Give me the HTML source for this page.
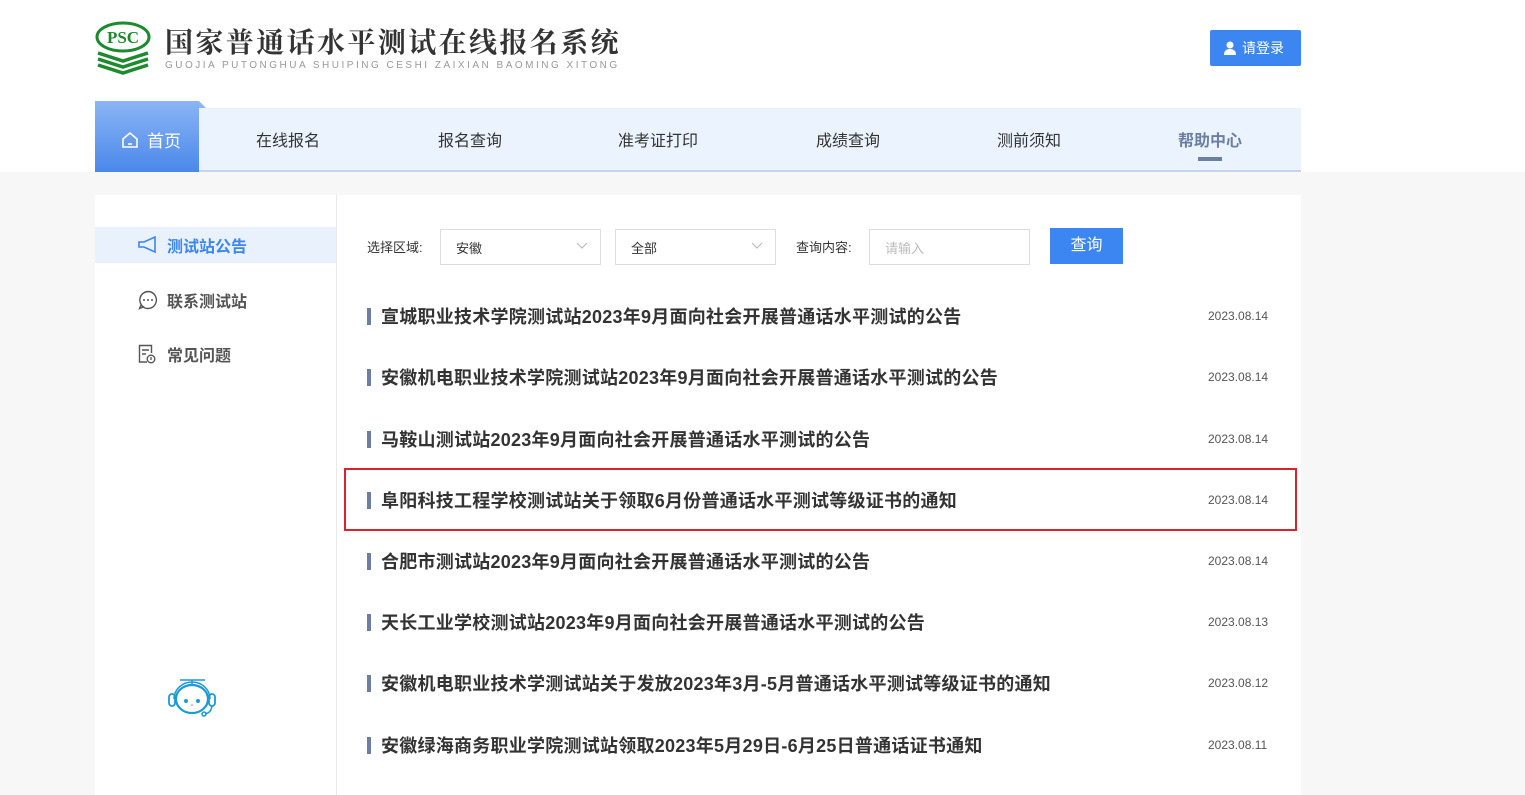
<!DOCTYPE html><html><head><meta charset="utf-8"><style>
*{margin:0;padding:0;box-sizing:border-box}
body{width:1525px;height:787px;overflow:hidden;background:#f7f7f7;font-family:"Liberation Sans","Noto Sans CJK SC",sans-serif;position:relative}
.top{position:absolute;left:0;top:0;width:1525px;height:172px;background:#fff}
.abs{position:absolute}
.nav{position:absolute;left:95px;top:108px;width:1206px;height:64px;background:#ebf4fe;border-bottom:2px solid #c5d5ea}
.ni{position:absolute;top:127px;font-size:16px;color:#333;transform:translateX(-50%);white-space:nowrap}
.card{position:absolute;left:95px;top:195px;width:1206px;height:600px;background:#fff}
.side{position:absolute;left:95px;top:195px;width:242px;height:600px;border-right:1px solid #e8e8e8}
.row{position:absolute;left:367px;width:910px;height:20px}
.row .b{position:absolute;left:0;top:2px;width:4px;height:17px;background:#6c7fa3}
.row .t{position:absolute;left:14px;top:-3px;font-size:18px;font-weight:bold;color:#333;white-space:nowrap;letter-spacing:0.25px}
.row .d{position:absolute;left:841px;top:3px;font-size:12px;color:#555}
.sel{position:absolute;top:229px;height:36px;border:1px solid #ddd;font-size:13px;color:#333;padding:8px 0 0 15px}
.sel svg{position:absolute;right:12px;top:12px}
</style></head><body>
<div class="top"></div>
<svg class="abs" style="left:95px;top:20px" width="56" height="56" viewBox="0 0 56 56">
<ellipse cx="28" cy="17" rx="26" ry="14" fill="none" stroke="#1d8a2f" stroke-width="3"/>
<text x="28" y="23" font-family="Liberation Serif" font-weight="bold" font-size="17" fill="#1d8a2f" text-anchor="middle">PSC</text>
<path d="M3 33 L28 41 L53 33 M3 39 L28 47 L53 39 M3 45 L28 53 L53 45" stroke="#1d8a2f" stroke-width="3.5" fill="none"/>
</svg>
<div class="abs" style="left:165px;top:26px;font-size:28px;line-height:36px;color:#333;font-weight:bold;letter-spacing:2.4px;font-family:'Liberation Serif','Noto Serif CJK SC',serif;white-space:nowrap">国家普通话水平测试在线报名系统</div>
<div class="abs" style="left:165px;top:60px;font-size:10px;color:#999;letter-spacing:2.5px;white-space:nowrap">GUOJIA PUTONGHUA SHUIPING CESHI ZAIXIAN BAOMING XITONG</div>
<div class="abs" style="left:1210px;top:30px;width:91px;height:36px;background:#3b86f0;border-radius:2px;color:#fff;font-size:14px;padding:8px 0 0 32px">请登录
<svg class="abs" style="left:14px;top:11px" width="12" height="14" viewBox="0 0 12 14"><circle cx="6" cy="4" r="3.5" fill="#fff"/><path d="M0 14 Q0 8 6 8 Q12 8 12 14Z" fill="#fff"/></svg></div>
<div class="nav"></div>
<div class="abs" style="left:95px;top:101px;width:104px;height:71px;background:linear-gradient(#8bb5f5,#4a88ea)"></div>
<div class="abs" style="left:199px;top:101px;width:0;height:0;border-left:7px solid #8bb5f5;border-top:7px solid transparent"></div>
<svg class="abs" style="left:121px;top:131px" width="18" height="18" viewBox="0 0 18 18"><path d="M2 8 L9 2 L16 8 V16 H2Z" fill="none" stroke="#fff" stroke-width="1.6"/><path d="M7 13 H11" stroke="#fff" stroke-width="1.6"/></svg>
<div class="abs" style="left:147px;top:127px;font-size:17px;color:#fff">首页</div>
<div class="ni" style="left:288px">在线报名</div>
<div class="ni" style="left:470px">报名查询</div>
<div class="ni" style="left:658px">准考证打印</div>
<div class="ni" style="left:848px">成绩查询</div>
<div class="ni" style="left:1029px">测前须知</div>
<div class="ni" style="left:1210px;color:#6c7fa3;font-weight:bold">帮助中心</div>
<div class="abs" style="left:1198px;top:157px;width:24px;height:4px;background:#6c7fa3"></div>
<div class="card"></div>
<div class="side"></div>
<div class="abs" style="left:95px;top:227px;width:241px;height:36px;background:#e9f1fd"></div>
<svg class="abs" style="left:138px;top:236px" width="20" height="18" viewBox="0 0 20 18"><path d="M1 6 H6 L17 1 V16 L6 11 H1Z" fill="none" stroke="#3b86f0" stroke-width="1.6"/></svg>
<div class="abs" style="left:167px;top:233px;font-size:16px;font-weight:bold;color:#3b86f0">测试站公告</div>
<svg class="abs" style="left:138px;top:290px" width="20" height="20" viewBox="0 0 20 20"><path d="M10 1.5 A8.5 8.5 0 1 1 3 15 L1.5 18.5 L5.5 17 A8.5 8.5 0 0 1 10 1.5" fill="none" stroke="#555" stroke-width="1.4"/><circle cx="6" cy="10" r="1" fill="#555"/><circle cx="10" cy="10" r="1" fill="#555"/><circle cx="14" cy="10" r="1" fill="#555"/></svg>
<div class="abs" style="left:167px;top:288px;font-size:16px;font-weight:bold;color:#555">联系测试站</div>
<svg class="abs" style="left:138px;top:344px" width="18" height="20" viewBox="0 0 18 20"><path d="M9 18 H1.5 V1.5 H13.5 V9" fill="none" stroke="#555" stroke-width="1.4"/><path d="M4 6 H11 M4 10 H8" stroke="#555" stroke-width="1.4"/><circle cx="13" cy="15" r="3.8" fill="none" stroke="#555" stroke-width="1.4"/><path d="M13 13 V16" stroke="#555" stroke-width="1.3"/></svg>
<div class="abs" style="left:167px;top:342px;font-size:16px;font-weight:bold;color:#555">常见问题</div>
<svg class="abs" style="left:165px;top:677px" width="54" height="42" viewBox="0 0 54 42"><path d="M15 3 H40 M27 3 V7" stroke="#1a9ad6" stroke-width="1.5"/><ellipse cx="27" cy="22" rx="16" ry="14" fill="none" stroke="#1a9ad6" stroke-width="2.2"/><path d="M9 22 A18 17 0 0 1 45 22" fill="none" stroke="#1a9ad6" stroke-width="1.5"/><rect x="4" y="17" width="6" height="12" rx="3" fill="none" stroke="#1a9ad6" stroke-width="1.8"/><rect x="44" y="17" width="6" height="12" rx="3" fill="none" stroke="#1a9ad6" stroke-width="1.8"/><path d="M47 29 Q46 36 40 37" fill="none" stroke="#1a9ad6" stroke-width="1.5"/><circle cx="39" cy="37" r="2" fill="none" stroke="#1a9ad6" stroke-width="1.5"/><circle cx="21" cy="24" r="2" fill="#1a9ad6"/><circle cx="33" cy="24" r="2" fill="#1a9ad6"/><circle cx="27" cy="28" r="0.8" fill="#e55"/></svg>
<div class="abs" style="left:367px;top:237px;font-size:13px;color:#333">选择区域:</div>
<div class="sel" style="left:440px;width:161px">安徽<svg width="12" height="8" viewBox="0 0 12 8"><path d="M1 1 L6 6 L11 1" fill="none" stroke="#bbb" stroke-width="1.2"/></svg></div>
<div class="sel" style="left:615px;width:161px">全部<svg width="12" height="8" viewBox="0 0 12 8"><path d="M1 1 L6 6 L11 1" fill="none" stroke="#bbb" stroke-width="1.2"/></svg></div>
<div class="abs" style="left:796px;top:237px;font-size:13px;color:#333">查询内容:</div>
<div class="sel" style="left:869px;width:161px;color:#bbb">请输入</div>
<div class="abs" style="left:1050px;top:228px;width:73px;height:36px;background:#3b86f0;color:#fff;font-size:16px;text-align:center;line-height:36px">查询</div>
<div class="abs" style="left:344px;top:468px;width:953px;height:63px;border:2px solid #d9232d"></div>
<div class="row" style="top:306px"><div class="b"></div><div class="t">宣城职业技术学院测试站2023年9月面向社会开展普通话水平测试的公告</div><div class="d">2023.08.14</div></div>
<div class="row" style="top:367px"><div class="b"></div><div class="t">安徽机电职业技术学院测试站2023年9月面向社会开展普通话水平测试的公告</div><div class="d">2023.08.14</div></div>
<div class="row" style="top:429px"><div class="b"></div><div class="t">马鞍山测试站2023年9月面向社会开展普通话水平测试的公告</div><div class="d">2023.08.14</div></div>
<div class="row" style="top:490px"><div class="b"></div><div class="t">阜阳科技工程学校测试站关于领取6月份普通话水平测试等级证书的通知</div><div class="d">2023.08.14</div></div>
<div class="row" style="top:551px"><div class="b"></div><div class="t">合肥市测试站2023年9月面向社会开展普通话水平测试的公告</div><div class="d">2023.08.14</div></div>
<div class="row" style="top:612px"><div class="b"></div><div class="t">天长工业学校测试站2023年9月面向社会开展普通话水平测试的公告</div><div class="d">2023.08.13</div></div>
<div class="row" style="top:673px"><div class="b"></div><div class="t">安徽机电职业技术学测试站关于发放2023年3月-5月普通话水平测试等级证书的通知</div><div class="d">2023.08.12</div></div>
<div class="row" style="top:735px"><div class="b"></div><div class="t">安徽绿海商务职业学院测试站领取2023年5月29日-6月25日普通话证书通知</div><div class="d">2023.08.11</div></div>
</body></html>
